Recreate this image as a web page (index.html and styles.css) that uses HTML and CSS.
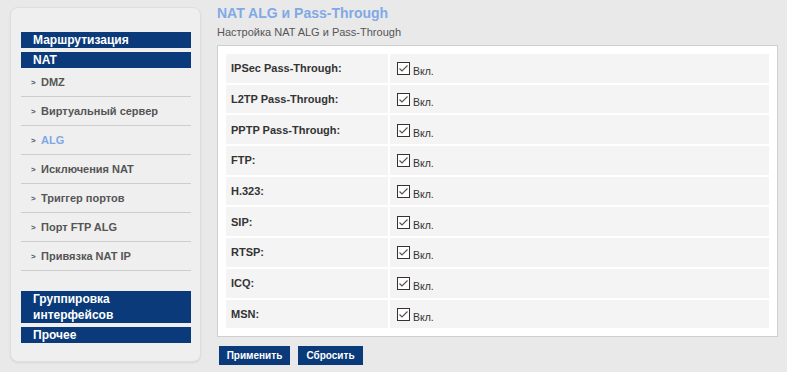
FILE: index.html
```html
<!DOCTYPE html>
<html>
<head>
    <title>NAT ALG и Pass-Through</title>
    <link rel="stylesheet" href="styles.css">
</head>
<body>
    <div class="page">
        <div class="sidebar">
            <div class="nav-head">Маршрутизация</div>
            <div class="nav-head nav-tight">NAT</div>
            <div class="nav-item"><span class="arrow">&gt;</span>DMZ</div>
            <div class="nav-item"><span class="arrow">&gt;</span>Виртуальный сервер</div>
            <div class="nav-item active"><span class="arrow">&gt;</span>ALG</div>
            <div class="nav-item"><span class="arrow">&gt;</span>Исключения NAT</div>
            <div class="nav-item"><span class="arrow">&gt;</span>Триггер портов</div>
            <div class="nav-item"><span class="arrow">&gt;</span>Порт FTP ALG</div>
            <div class="nav-item"><span class="arrow">&gt;</span>Привязка NAT IP</div>
            <div class="nav-head nav-group">Группировка интерфейсов</div>
            <div class="nav-head">Прочее</div>
        </div>

        <div class="content">
            <h1>NAT ALG и Pass-Through</h1>
            <div class="subtitle">Настройка NAT ALG и Pass-Through</div>

            <div class="box">
                <table>
                    <tbody id="algList">
                    </tbody>
                </table>
            </div>

            <div class="actions">
                <button type="button" class="btn-apply">Применить</button>
                <button type="button" class="btn-reset">Сбросить</button>
            </div>
        </div>
    </div>

    <script>
        // Список протоколов
        const items = ['IPSec Pass-Through:', 'L2TP Pass-Through:', 'PPTP Pass-Through:',
            'FTP:', 'H.323:', 'SIP:', 'RTSP:', 'ICQ:', 'MSN:'];

        const algList = document.getElementById('algList');
        items.forEach(name => {
            algList.innerHTML += `
                <tr>
                    <td class="label">${name}</td>
                    <td class="value">
                        <svg class="check" width="13" height="13" viewBox="0 0 13 13">
                            <rect x="0.5" y="0.5" width="12" height="12" fill="#fff" stroke="#333"/>
                            <polyline points="2.5,6.5 5,9 10.5,3.5" fill="none" stroke="#555" stroke-width="1.2"/>
                        </svg><span class="on">Вкл.</span>
                    </td>
                </tr>
            `;
        });
    </script>
</body>
</html>
```

FILE: styles.css
```css
body {
    margin: 0;
    background-color: #e9e9e9;
    font-family: "Liberation Sans", Arial, sans-serif;
}
.page {
    display: flex;
    align-items: flex-start;
}
.sidebar {
    box-sizing: border-box;
    width: 191px;
    height: 355px;
    margin: 7px 0 0 10px;
    padding: 24px 9px 0 10px;
    background-color: #efefef;
    border: 1px solid #dedede;
    border-radius: 8px;
    box-shadow: 0 1px 2px rgba(0,0,0,0.08);
}
.nav-head {
    background-color: #0a3a7a;
    color: white;
    font-size: 12px;
    font-weight: bold;
    line-height: 16px;
    padding: 0 12px;
    margin-bottom: 4px;
}
.nav-tight {
    margin-bottom: 0;
}
.nav-group {
    margin-top: 20px;
}
.nav-item {
    height: 28px;
    line-height: 28px;
    border-bottom: 1px solid #cdcdcd;
    padding-left: 10px;
    font-size: 11px;
    font-weight: bold;
    color: #555;
}
.nav-item.active {
    color: #7ea8e6;
}
.arrow {
    display: inline-block;
    width: 10px;
    font-size: 8px;
    color: #555;
    vertical-align: 1px;
}
.content {
    margin-left: 16px;
    padding-top: 5px;
}
h1 {
    margin: 0;
    font-size: 14px;
    line-height: 16px;
    color: #80aae6;
}
.subtitle {
    margin-top: 5px;
    font-size: 11px;
    line-height: 13px;
    color: #555;
}
.box {
    box-sizing: border-box;
    width: 561px;
    margin-top: 6px;
    padding: 6px;
    background-color: white;
    border: 1px solid #cfcfcf;
}
table {
    width: 100%;
    border-spacing: 2px;
}
td {
    height: 28.7px;
    padding: 0;
    background-color: #f4f4f4;
    font-size: 11px;
}
td.label {
    width: 157px;
    padding-left: 5px;
    font-weight: bold;
    color: #333;
}
td.value {
    padding: 3px 0 0 7px;
    box-sizing: border-box;
    color: #333;
}
.check {
    vertical-align: baseline;
}
.on {
    margin-left: 3px;
    font-size: 10.5px;
}
.actions {
    display: flex;
    gap: 8px;
    margin-top: 9px;
    margin-left: 2px;
}
button {
    height: 19px;
    padding: 0;
    background-color: #0a3a7a;
    color: white;
    border: none;
    font-family: "Liberation Sans", Arial, sans-serif;
    font-size: 10px;
    font-weight: bold;
    cursor: pointer;
}
.btn-apply {
    width: 71px;
}
.btn-reset {
    width: 65px;
}
```
